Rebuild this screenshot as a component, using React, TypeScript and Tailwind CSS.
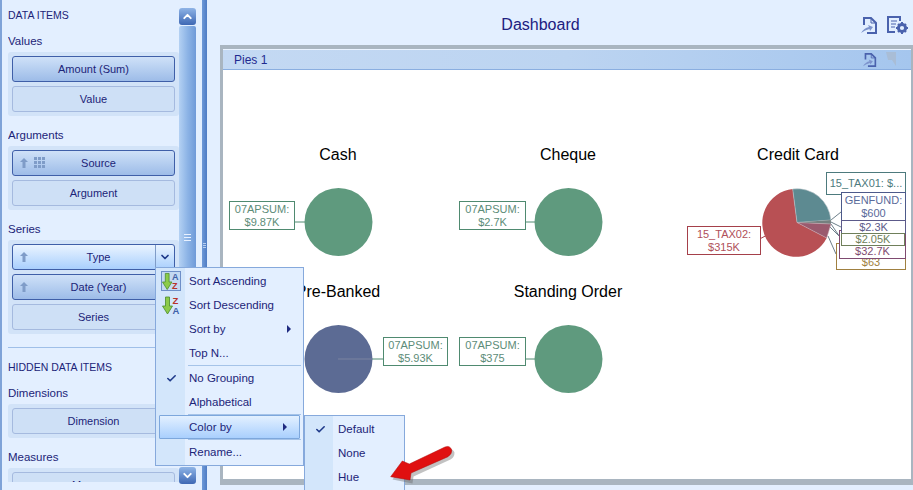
import React from 'react';
import { ChevronUp, ChevronDown, Check } from 'lucide-react';

const FONT = "font-['Liberation_Sans',Arial,sans-serif]";

const UpArrow = () => (
  <svg width="10" height="12" viewBox="0 0 10 12" className="shrink-0">
    <path d="M5 1 L9 5 H6.5 V11 H3.5 V5 H1 Z" fill="#7f9cc8" />
  </svg>
);

const GridDots = () => (
  <svg width="12" height="12" viewBox="0 0 12 12" className="shrink-0">
    {[0, 4, 8].map((y) =>
      [0, 4, 8].map((x) => <rect key={`${x}-${y}`} x={x} y={y} width="3" height="3" fill="#7f9cc8" />)
    )}
  </svg>
);

type FieldProps = {
  label: string;
  active?: boolean;
  hot?: boolean;
  arrow?: boolean;
  grid?: boolean;
};

const Field: React.FC<FieldProps> = ({ label, active, hot, arrow, grid }) => {
  const look = hot
    ? 'border-[#3f5fa8] bg-gradient-to-b from-[#eaf4ff] to-[#a9cffd]'
    : active
      ? 'border-[#3f5fa8] bg-gradient-to-b from-[#cfe1f8] to-[#9dbce8]'
      : 'border-[#a5badf] bg-[#cee0f6]';
  return (
    <div className={`relative flex h-[26px] shrink-0 items-center rounded-[3px] border ${look}`}>
      {arrow && (
        <div className="absolute left-[6px] top-[6px] flex items-center gap-[5px]">
          <UpArrow />
          {grid && <GridDots />}
        </div>
      )}
      <span className={`flex-1 text-center text-[11px] text-[#1c2478] ${arrow ? 'pl-[10px]' : ''}`}>{label}</span>
      {hot && (
        <div className="absolute bottom-0 right-0 top-0 flex w-[19px] items-center justify-center border-l border-[#7f9cc8]">
          <ChevronDown size={12} strokeWidth={3.5} className="text-[#1f3a8a]" />
        </div>
      )}
    </div>
  );
};

const Group: React.FC<{ children: React.ReactNode }> = ({ children }) => (
  <div className="flex shrink-0 flex-col gap-[4px] rounded-[3px] bg-[#d2e3f8] p-[4px]">{children}</div>
);

const GroupTitle: React.FC<{ text: string; first?: boolean }> = ({ text, first }) => (
  <div className={`flex h-[22px] shrink-0 items-center pt-[2px] text-[11.5px] text-[#1c2478] ${first ? 'mt-[5px]' : 'mt-[8px]'}`}>
    {text}
  </div>
);

const SectionTitle: React.FC<{ text: string }> = ({ text }) => (
  <div className="flex h-[20px] shrink-0 items-center pt-[2px] text-[10.5px] text-[#1c2478]">{text}</div>
);

const Scrollbar = () => (
  <div className="mt-[8px] flex h-[476px] w-[17px] shrink-0 flex-col gap-[1px]">
    <div className="flex h-[17px] items-center justify-center rounded-[3px] bg-gradient-to-b from-[#8fb4e6] to-[#3f68b4]">
      <ChevronUp size={13} strokeWidth={3.5} className="text-white" />
    </div>
    <div className="flex flex-1 flex-col items-center rounded-[2px] bg-gradient-to-r from-[#b4d1f3] via-[#8db4e6] to-[#6f9ad8] pt-[208px]">
      <div className="flex flex-col gap-[2px]">
        <div className="h-px w-[7px] bg-[#e8f1ff]" />
        <div className="h-px w-[7px] bg-[#e8f1ff]" />
        <div className="h-px w-[7px] bg-[#e8f1ff]" />
      </div>
    </div>
    <div className="flex h-[17px] items-center justify-center rounded-[3px] bg-gradient-to-b from-[#8fb4e6] to-[#3f68b4]">
      <ChevronDown size={13} strokeWidth={3.5} className="text-white" />
    </div>
  </div>
);

const SortIcon: React.FC<{ reverse?: boolean }> = ({ reverse }) => (
  <svg width="19" height="19" viewBox="0 0 19 19">
    <path d="M3.5 1 H7.5 V10 H10.5 L5.5 18 L0.5 10 H3.5 Z" fill="#8ccb4a" stroke="#4a8a2a" strokeWidth="0.8" />
    <text x="10.5" y="8" fontSize="9.5" fontWeight="700" fontFamily="Liberation Sans" fill={reverse ? '#b8322a' : '#3f62a8'}>
      {reverse ? 'Z' : 'A'}
    </text>
    <text x="10.5" y="17.5" fontSize="9.5" fontWeight="700" fontFamily="Liberation Sans" fill={reverse ? '#3f62a8' : '#b8322a'}>
      {reverse ? 'A' : 'Z'}
    </text>
  </svg>
);

const Caret = () => (
  <div className="absolute right-[12px] top-1/2 h-0 w-0 -translate-y-1/2 border-y-[4px] border-l-[4px] border-y-transparent border-l-[#1f2a80]" />
);

type RowProps = {
  label: string;
  gutter?: React.ReactNode;
  submenu?: boolean;
  selected?: boolean;
};

const MenuRow: React.FC<RowProps> = ({ label, gutter, submenu, selected }) => (
  <div className={`relative flex h-[24px] items-center ${selected ? 'mx-[3px] rounded-[1px] border border-[#7da7dc] bg-gradient-to-b from-[#e3f0ff] to-[#a9cffd]' : ''}`}>
    <div className={`flex shrink-0 items-center justify-center ${selected ? 'w-[26px]' : 'w-[30px]'}`}>{gutter}</div>
    <span className="pl-[3px] pt-[2px] text-[11.5px] text-[#1c2478]">{label}</span>
    {submenu && <Caret />}
  </div>
);

const MenuSeparator = () => (
  <div className="flex h-[1px] items-center pl-[32px] pr-[2px]">
    <div className="h-px w-full bg-[#a5c3e8]" />
  </div>
);

const Tick = () => <Check size={11} strokeWidth={3.5} className="text-[#1f3a8a]" />;

const ContextMenu = () => (
  <div className="absolute left-[155px] top-[267px] w-[149px] border border-[#86a9dc] bg-[linear-gradient(to_right,#d3e6fb_0,#d3e6fb_29px,#e3efff_29px)] py-[1px]">
    <MenuRow
      label="Sort Ascending"
      gutter={
        <div className="flex h-[20px] w-[20px] items-center justify-center border border-[#6f8fc8] bg-[#c4d9f2]">
          <SortIcon />
        </div>
      }
    />
    <MenuRow label="Sort Descending" gutter={<SortIcon reverse />} />
    <MenuRow label="Sort by" submenu />
    <MenuRow label="Top N..." />
    <MenuSeparator />
    <MenuRow label="No Grouping" gutter={<Tick />} />
    <MenuRow label="Alphabetical" />
    <MenuSeparator />
    <MenuRow label="Color by" submenu selected />
    <MenuSeparator />
    <MenuRow label="Rename..." />
  </div>
);

const ColorSubmenu = () => (
  <div className="absolute left-[304px] top-[415px] h-[90px] w-[101px] border border-[#86a9dc] bg-[linear-gradient(to_right,#d3e6fb_0,#d3e6fb_28px,#e3efff_28px)] py-px">
    <MenuRow label="Default" gutter={<Tick />} />
    <MenuRow label="None" />
    <MenuRow label="Hue" />
  </div>
);

const RedArrow = () => (
  <svg width="70" height="42" viewBox="0 0 70 42" className="absolute left-[388px] top-[444px]">
    <path d="M3 33 L15 17 L22 20 L58 3 Q63 1 65 6 Q65 11 61 13 L24 30 L23 37 Z" fill="#666" opacity="0.4" transform="translate(1.5 2.5)" />
    <path d="M2.7 32.7 L14.3 17 L21.3 20 L57 3 Q62 1 63.7 6 Q64 10 60 12.7 L23 29 L22 36 Z" fill="#e01010" stroke="#b00808" strokeWidth="0.5" />
  </svg>
);

const DocIcon: React.FC<{ size?: number }> = ({ size = 17 }) => (
  <svg width={size} height={size} viewBox="0 0 17 17" className="shrink-0">
    <path d="M3 8 V1 H10 L15 6 V16 H6" fill="none" stroke="#4a62ad" strokeWidth="2" />
    <path d="M10 1 V6 H15" fill="none" stroke="#4a62ad" strokeWidth="1" />
    <path d="M0 16 Q3 11 8 10 L7 8 L12 10 L9 14 L8.5 12 Q4 13 0 16 Z" fill="#7d93cc" />
  </svg>
);

const DocGearIcon = () => (
  <svg width="21" height="18" viewBox="0 0 21 18" className="shrink-0">
    <path d="M13 5 V1 H1 V16 H8" fill="none" stroke="#4a62ad" strokeWidth="2" />
    <path d="M4 5 H10 M4 8 H9 M4 11 H8" stroke="#4a62ad" strokeWidth="1" />
    <circle cx="15" cy="12" r="3.6" fill="none" stroke="#4a62ad" strokeWidth="3" />
    <path d="M15 6 V8 M15 16 V18 M9 12 H11 M19 12 H21 M11 8 L12 9 M18 15 L19 16 M19 8 L18 9 M12 15 L11 16" stroke="#4a62ad" strokeWidth="2" />
  </svg>
);

const PanelBackIcon = () => (
  <svg width="12" height="15" viewBox="0 0 12 15" className="shrink-0">
    <path d="M0 0 H10 V14 L6 8 H2 Z" fill="#a9bdd6" />
  </svg>
);

type ChartLabel = { lines: string[]; box: string; border: string; text: string };

type PieCell = {
  title: string;
  pie: React.ReactNode;
  labels: ChartLabel[];
};

const GREEN = '#5f9a7e';
const flatPie = (fill: string, lineFrom: number, lineTo: number, stroke: string) => (
  <>
    <line x1={lineFrom} y1="58" x2={lineTo} y2="58" stroke={stroke} strokeWidth="1" />
    <circle cx="115.5" cy="58" r="34" fill={fill} />
  </>
);

const CreditPie = () => (
  <>
    <path d="M147 30 L157 25 M148 56 L158 48 M148 58 L160 64 M148 60 L159 76 M145 72 L153 90 M146 62 L156 72" stroke="#6d7f8a" strokeWidth="1" fill="none" />
    <path d="M71 78 L86 70" stroke="#a5404a" strokeWidth="1" />
    <path d="M114 58.5 L143.7 74 A34 34 0 1 1 109.7 25 Z" fill="#b85054" />
    <path d="M114 58.5 L109.7 25 A34 34 0 0 1 147.9 56 Z" fill="#5d8a91" stroke="#b9c4c9" strokeWidth="0.6" />
    <path d="M114 58.5 L147.9 56 L148 60 Z" fill="#75807f" />
    <path d="M114 58.5 L148 60 L143.7 74 Z" fill="#9a5a6e" stroke="#c9b3bb" strokeWidth="0.5" />
  </>
);

const cells: PieCell[] = [
  {
    title: 'Cash',
    pie: flatPie(GREEN, 72, 90, '#4f8a70'),
    labels: [{ lines: ['07APSUM:', '$9.87K'], box: 'left-[6px] top-[37px] w-[66px] h-[29px]', border: 'border-[#4f8a70]', text: 'text-[#5d8c78]' }],
  },
  {
    title: 'Cheque',
    pie: flatPie(GREEN, 73, 90, '#4f8a70'),
    labels: [{ lines: ['07APSUM:', '$2.7K'], box: 'left-[6px] top-[37px] w-[67px] h-[29px]', border: 'border-[#4f8a70]', text: 'text-[#5d8c78]' }],
  },
  {
    title: 'Credit Card',
    pie: <CreditPie />,
    labels: [
      { lines: ['15_TAX02:', '$315K'], box: 'left-[4px] top-[62px] w-[74px] h-[29px]', border: 'border-[#a5404a]', text: 'text-[#b0505a]' },
      { lines: ['15_TAX01: $...'], box: 'left-[143px] top-[8px] w-[80px] h-[23px]', border: 'border-[#4d7a7d]', text: 'text-[#4d7a7d]' },
      { lines: ['$63'], box: 'left-[153px] top-[79px] w-[70px] h-[27px] justify-end', border: 'border-[#a08040]', text: 'text-[#a08040]' },
      { lines: ['$32.7K'], box: 'left-[156px] top-[66px] w-[67px] h-[29px] justify-end', border: 'border-[#7f4a70]', text: 'text-[#7f4a70]' },
      { lines: ['GENFUND:', '$600'], box: 'left-[158px] top-[28px] w-[65px] h-[29px]', border: 'border-[#4d5a8a]', text: 'text-[#5a6a9a]' },
      { lines: ['$2.3K'], box: 'left-[158px] top-[56px] w-[65px] h-[14px]', border: 'border-[#5c5a8a]', text: 'text-[#5c5a8a]' },
      { lines: ['$2.05K'], box: 'left-[158px] top-[69px] w-[64px] h-[13px]', border: 'border-[#6f7f5a]', text: 'text-[#6f7f5a]' },
    ],
  },
  {
    title: 'Pre-Banked',
    pie: (
      <>
        {flatPie('#5c6b94', 149, 160, '#4f8a70')}
        <line x1="115" y1="58" x2="149" y2="58" stroke="#7a84a0" strokeWidth="1" />
      </>
    ),
    labels: [{ lines: ['07APSUM:', '$5.93K'], box: 'left-[160px] top-[36px] w-[65px] h-[29px]', border: 'border-[#4f8a70]', text: 'text-[#5d8c78]' }],
  },
  {
    title: 'Standing Order',
    pie: flatPie(GREEN, 73, 90, '#4f8a70'),
    labels: [{ lines: ['07APSUM:', '$375'], box: 'left-[6px] top-[36px] w-[67px] h-[29px]', border: 'border-[#4f8a70]', text: 'text-[#5d8c78]' }],
  },
];

const PieChart: React.FC<{ cell: PieCell }> = ({ cell }) => (
  <div className="flex h-[137px] w-[230px] flex-col">
    <div className="flex h-[20px] items-center justify-center pt-[2px] text-[16px] text-black">{cell.title}</div>
    <div className="relative h-[117px]">
      <svg width="230" height="117" viewBox="0 0 230 117" className="absolute inset-0">
        {cell.pie}
      </svg>
      {cell.labels.map((l) => (
        <div
          key={l.lines.join()}
          className={`absolute flex flex-col items-center justify-center border bg-white text-[11px] leading-[13px] ${l.box} ${l.border} ${l.text}`}
        >
          {l.lines.map((line) => (
            <span key={line}>{line}</span>
          ))}
        </div>
      ))}
    </div>
  </div>
);

export default function App() {
  return (
    <div className={`relative flex h-[490px] w-[913px] overflow-hidden bg-[#e3efff] ${FONT}`}>
      {/* Data items panel */}
      <aside className="flex h-[490px] w-[202px] shrink-0 border-l-2 border-[#7fa3d8]">
        <div className="ml-[6px] flex h-[482px] w-[171px] shrink-0 flex-col overflow-hidden pt-[5px]">
          <SectionTitle text="DATA ITEMS" />
          <GroupTitle text="Values" first />
          <Group>
            <Field label="Amount (Sum)" active />
            <Field label="Value" />
          </Group>
          <GroupTitle text="Arguments" />
          <Group>
            <Field label="Source" active arrow grid />
            <Field label="Argument" />
          </Group>
          <GroupTitle text="Series" />
          <Group>
            <Field label="Type" hot arrow />
            <Field label="Date (Year)" active arrow />
            <Field label="Series" />
          </Group>
          <div className="mt-[13px] h-px shrink-0 bg-[#9fbfe8]" />
          <div className="mt-[9px]">
            <SectionTitle text="HIDDEN DATA ITEMS" />
          </div>
          <GroupTitle text="Dimensions" first />
          <Group>
            <Field label="Dimension" />
          </Group>
          <GroupTitle text="Measures" />
          <Group>
            <Field label="Measure" />
          </Group>
        </div>
        <Scrollbar />
      </aside>

      {/* Splitter */}
      <div className="flex w-[5px] shrink-0 items-center justify-center bg-gradient-to-r from-[#6f9ad8] to-[#4f7cc4]">
        <div className="flex flex-col gap-[1px]">
          <div className="h-px w-[3px] bg-[#b9d0f0]" />
          <div className="h-px w-[3px] bg-[#b9d0f0]" />
          <div className="h-px w-[3px] bg-[#b9d0f0]" />
        </div>
      </div>

      {/* Dashboard */}
      <main className="flex min-w-0 flex-1 flex-col pl-[13px]">
        <header className="flex h-[45px] shrink-0 items-center pt-[5px]">
          <div className="flex-1 text-center text-[16px] text-[#20207f]">Dashboard</div>
          <div className="flex items-center gap-[9px] pr-[5px]">
            <DocIcon />
            <DocGearIcon />
          </div>
        </header>
        <section className="flex h-[440px] shrink-0 flex-col border-[3px] border-b-[6px] border-r-[2px] border-t-[4px] border-[#a9b5c0] bg-white">
          <div className="flex h-[21px] shrink-0 items-center justify-between border-b border-t border-[#8aaee0] border-t-[#eaf3ff] bg-gradient-to-r from-[#c4d9f3] via-[#bcd4f1] to-[#a5c6ee] pl-[11px] pr-[13px]">
            <span className="text-[12px] text-[#1f2a90]">Pies 1</span>
            <div className="flex items-center gap-[9px]">
              <DocIcon size={14} />
              <PanelBackIcon />
            </div>
          </div>
          <div className="grid grid-cols-[230px_230px_230px] pt-[74px]">
            {cells.map((c) => (
              <PieChart key={c.title} cell={c} />
            ))}
          </div>
        </section>
      </main>

      {/* Popups */}
      <ContextMenu />
      <ColorSubmenu />
      <RedArrow />
    </div>
  );
}
